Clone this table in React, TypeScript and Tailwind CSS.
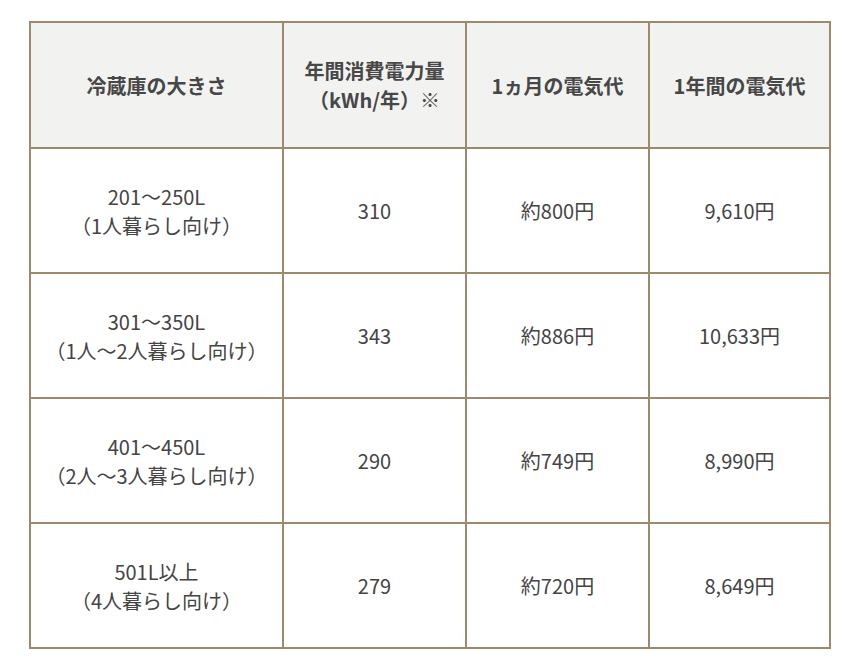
const headers = ["冷蔵庫の大きさ", "年間消費電力量\n（kWh/年）※", "1ヵ月の電気代", "1年間の電気代"];

const rows = [
  ["201〜250L\n（1人暮らし向け）", "310", "約800円", "9,610円"],
  ["301〜350L\n（1人〜2人暮らし向け）", "343", "約886円", "10,633円"],
  ["401〜450L\n（2人〜3人暮らし向け）", "290", "約749円", "8,990円"],
  ["501L以上\n（4人暮らし向け）", "279", "約720円", "8,649円"],
];

const widths = ["w-[253px]", "w-[183px]", "w-[183px]", "w-[181px]"];

export default function App() {
  return (
    <div
      className="min-h-screen bg-white pt-[21px] pl-[29px]"
      style={{ fontFamily: '"Noto Sans CJK JP", "Noto Sans", sans-serif' }}
    >
      <table className="w-[800px] table-fixed border-collapse border-2 border-[#9b8b6c] text-center">
        <thead>
          <tr className="h-[126px] bg-[#f2f3f0]">
            {headers.map((h, i) => (
              <th
                key={i}
                className={`${widths[i]} whitespace-pre-line border-2 border-[#9b8b6c] px-1 text-[20px] font-bold leading-[29px] text-[#474747]`}
              >
                {h}
              </th>
            ))}
          </tr>
        </thead>
        <tbody>
          {rows.map((r, ri) => (
            <tr key={ri} className="h-[125px] bg-white">
              {r.map((c, ci) => (
                <td
                  key={ci}
                  className="whitespace-pre-line border-2 border-[#9b8b6c] px-1 text-[20px] leading-[29px] text-[#444444]"
                >
                  {c}
                </td>
              ))}
            </tr>
          ))}
        </tbody>
      </table>
    </div>
  );
}
